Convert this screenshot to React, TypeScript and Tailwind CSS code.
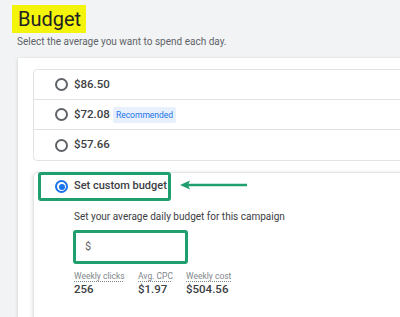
import React from 'react'

const options = [
  { price: '$86.50', recommended: false },
  { price: '$72.08', recommended: true },
  { price: '$57.66', recommended: false },
]

function Radio({ checked }: { checked?: boolean }) {
  if (checked) {
    return (
      <span className="flex h-[13px] w-[13px] shrink-0 items-center justify-center rounded-full border-2 border-[#1a73e8]">
        <span className="h-[6px] w-[6px] rounded-full bg-[#1a73e8]" />
      </span>
    )
  }
  return <span className="h-[13px] w-[13px] shrink-0 rounded-full border-2 border-[#5f6368]" />
}

export default function App() {
  return (
    <div className="h-[317px] w-[400px] overflow-hidden bg-[#f1f3f4] font-['Roboto',sans-serif]">
      <div className="pl-[12px] pt-[5px]">
        <div className="inline-flex h-[28px] w-[74px] items-center bg-[#f3f30c] pl-[6px] text-[20px] leading-none text-[#202124]">
          Budget
        </div>
      </div>
      <p className="ml-[17px] mt-[3px] text-[10px] leading-[12px] text-[#5f6368]">
        Select the average you want to spend each day.
      </p>

      <div className="ml-[18px] mt-[10px] w-[420px] bg-white pl-[15px] pt-[11px] shadow-[0_1px_3px_rgba(60,64,67,0.25)]">
        <div className="divide-y divide-[#e3e3e3] rounded-[4px] border border-[#e3e3e3]">
          {options.map((o) => (
            <div key={o.price} className="flex h-[30px] items-center pl-[21px]">
              <Radio />
              <span className="ml-[6px] text-[11.5px] font-medium text-[#3c4043]">{o.price}</span>
              {o.recommended && (
                <span className="ml-[3px] rounded-[2px] bg-[#e8f0fe] px-[3px] py-[3px] text-[8.5px] leading-[10px] text-[#1a73e8]">
                  Recommended
                </span>
              )}
            </div>
          ))}
        </div>

        <div className="mt-[11px] h-[160px] rounded-tl-[4px] border border-[#e3e3e3] shadow-[0_1px_4px_rgba(60,64,67,0.2)]">
          <div className="-mt-px flex items-center">
            <div className="ml-[4px] flex h-[29px] w-[133px] items-center rounded-[3px] border-[3px] border-[#1f9e6e] pl-[14px]">
              <Radio checked />
              <span className="ml-[6px] whitespace-nowrap text-[11px] font-medium text-[#3c4043]">Set custom budget</span>
            </div>
            <svg className="ml-[9px] -mt-[4px]" width="68" height="10" viewBox="0 0 68 10">
              <line x1="6" y1="5" x2="67" y2="5" stroke="#1f9e6e" strokeWidth="2.5" />
              <path d="M0 5 L10 0.5 L8 5 L10 9.5 Z" fill="#1f9e6e" />
            </svg>
          </div>

          <div className="pl-[40px]">
            <p className="mt-[10px] text-[10px] leading-[12px] text-[#3c4043]">
              Set your average daily budget for this campaign
            </p>
            <div className="-ml-px mt-[7px] flex h-[34px] w-[115px] items-center rounded-[3px] border-[3px] border-[#1f9e6e] pl-[9px] text-[11px] text-[#5f6368]">
              $
            </div>
            <div className="mt-[7px] flex">
              {[
                ['Weekly clicks', '256', 'w-[64px]'],
                ['Avg. CPC', '$1.97', 'w-[48px]'],
                ['Weekly cost', '$504.56', 'w-[80px]'],
              ].map(([label, value, w]) => (
                <div key={label} className={w}>
                  <div className="text-[8.5px] leading-[11px] text-[#80868b] underline decoration-dotted underline-offset-2">
                    {label}
                  </div>
                  <div className="mt-[1px] text-[11.5px] font-medium leading-[13px] text-[#3c4043]">{value}</div>
                </div>
              ))}
            </div>
          </div>
        </div>
      </div>
    </div>
  )
}
